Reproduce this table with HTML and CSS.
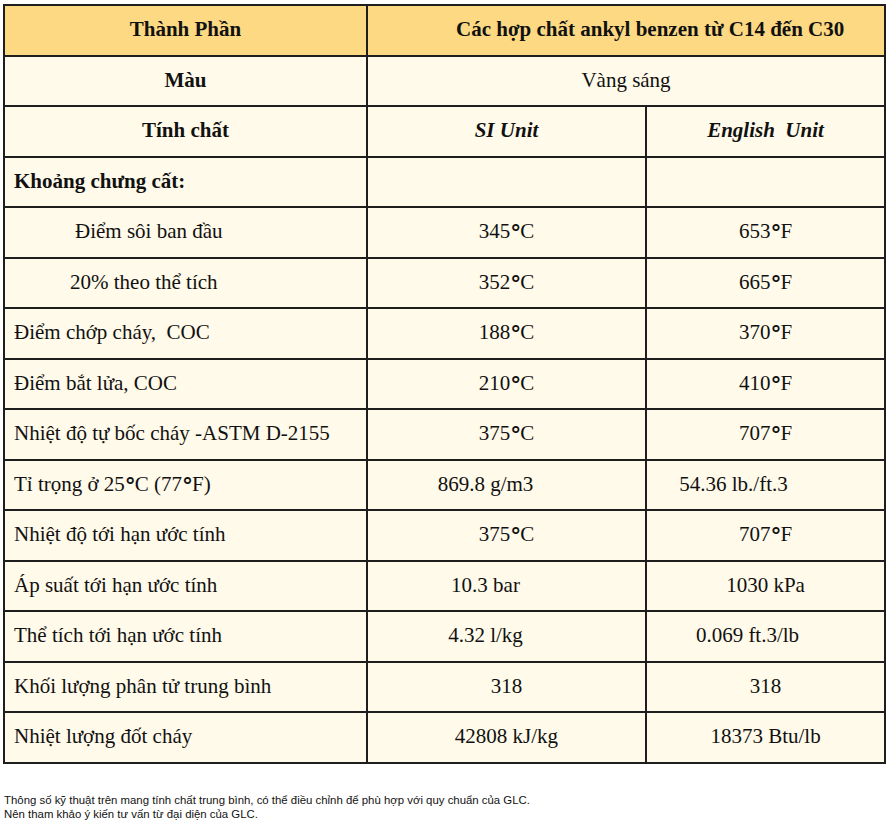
FILE: index.html
```html
<!DOCTYPE html>
<html lang="vi">
<head>
<meta charset="utf-8">
<title>Thông số kỹ thuật</title>
<link rel="stylesheet" href="styles.css">
</head>
<body>
<table class="spec">
  <colgroup>
    <col class="c1">
    <col class="c2">
    <col class="c3">
  </colgroup>
  <tr class="head">
    <td class="b center">Thành Phần</td>
    <td class="b title" colspan="2">Các hợp chất ankyl benzen từ C14 đến C30</td>
  </tr>
  <tr>
    <td class="b center">Màu</td>
    <td class="center" colspan="2">Vàng sáng</td>
  </tr>
  <tr>
    <td class="b center">Tính chất</td>
    <td class="bi center">SI Unit</td>
    <td class="bi center">English&nbsp; Unit</td>
  </tr>
  <tr>
    <td class="b">Khoảng chưng cất:</td>
    <td></td>
    <td></td>
  </tr>
  <tr>
    <td class="ind1">Điểm sôi ban đầu</td>
    <td class="center">345<span class="deg">°</span>C</td>
    <td class="center">653<span class="deg">°</span>F</td>
  </tr>
  <tr>
    <td class="ind2">20% theo thể tích</td>
    <td class="center">352<span class="deg">°</span>C</td>
    <td class="center">665<span class="deg">°</span>F</td>
  </tr>
  <tr>
    <td>Điểm chớp cháy,&nbsp; COC</td>
    <td class="center">188<span class="deg">°</span>C</td>
    <td class="center">370<span class="deg">°</span>F</td>
  </tr>
  <tr>
    <td>Điểm bắt lửa, COC</td>
    <td class="center">210<span class="deg">°</span>C</td>
    <td class="center">410<span class="deg">°</span>F</td>
  </tr>
  <tr>
    <td>Nhiệt độ tự bốc cháy -ASTM D-2155</td>
    <td class="center">375<span class="deg">°</span>C</td>
    <td class="center">707<span class="deg">°</span>F</td>
  </tr>
  <tr>
    <td>Tỉ trọng ở 25<span class="deg">°</span>C (77<span class="deg">°</span>F)</td>
    <td class="center off40">869.8 g/m3</td>
    <td class="center off64">54.36 lb./ft.3</td>
  </tr>
  <tr>
    <td>Nhiệt độ tới hạn ước tính</td>
    <td class="center">375<span class="deg">°</span>C</td>
    <td class="center">707<span class="deg">°</span>F</td>
  </tr>
  <tr>
    <td>Áp suất tới hạn ước tính</td>
    <td class="center off40">10.3 bar</td>
    <td class="center">1030 kPa</td>
  </tr>
  <tr>
    <td>Thể tích tới hạn ước tính</td>
    <td class="center off40">4.32 l/kg</td>
    <td class="center off36">0.069 ft.3/lb</td>
  </tr>
  <tr>
    <td>Khối lượng phân tử trung bình</td>
    <td class="center">318</td>
    <td class="center">318</td>
  </tr>
  <tr>
    <td>Nhiệt lượng đốt cháy</td>
    <td class="center">42808 kJ/kg</td>
    <td class="center">18373 Btu/lb</td>
  </tr>
</table>
<p class="note">Thông số kỹ thuật trên mang tính chất trung bình, có thể điều chỉnh để phù hợp với quy chuẩn của GLC.<br>Nên tham khảo ý kiến tư vấn từ đại diện của GLC.</p>
</body>
</html>
```

FILE: styles.css
```css
html, body {
  margin: 0;
  padding: 0;
  background: #ffffff;
}

body {
  padding: 4px 0 0 3px;
}

.spec {
  border-collapse: collapse;
  table-layout: fixed;
  width: 881px;
  font-family: "Liberation Serif", "Times New Roman", serif;
  font-size: 21px;
  color: #111;
  background: #fffae9;
}

.c1 { width: 363px; }
.c2 { width: 279px; }
.c3 { width: 239px; }

.spec td {
  border: 2px solid #1e1e1e;
  height: 46.5px;
  padding: 0 0 2px 9px;
  vertical-align: middle;
  line-height: 24px;
  white-space: nowrap;
}

.spec .head td {
  background: #fcd982;
}

.spec td.center {
  text-align: center;
  padding-left: 0;
}

.spec td.title {
  padding-left: 88px;
  text-align: left;
}

.b { font-weight: bold; }

.bi {
  font-weight: bold;
  font-style: italic;
}

.spec td.ind1 { padding-left: 70px; }
.spec td.ind2 { padding-left: 65px; }

.spec td.off40 { padding-right: 42px; }
.spec td.off36 { padding-right: 36px; }
.spec td.off64 { padding-right: 64px; }

.deg {
  font-family: "DejaVu Sans", sans-serif;
  font-weight: bold;
  font-size: 22px;
  line-height: 0;
  position: relative;
  top: 2px;
  letter-spacing: -1px;
}

.note {
  margin: 29px 0 0 1px;
  font-family: "Liberation Sans", Arial, sans-serif;
  font-size: 11.4px;
  line-height: 14px;
  color: #111;
}
```
